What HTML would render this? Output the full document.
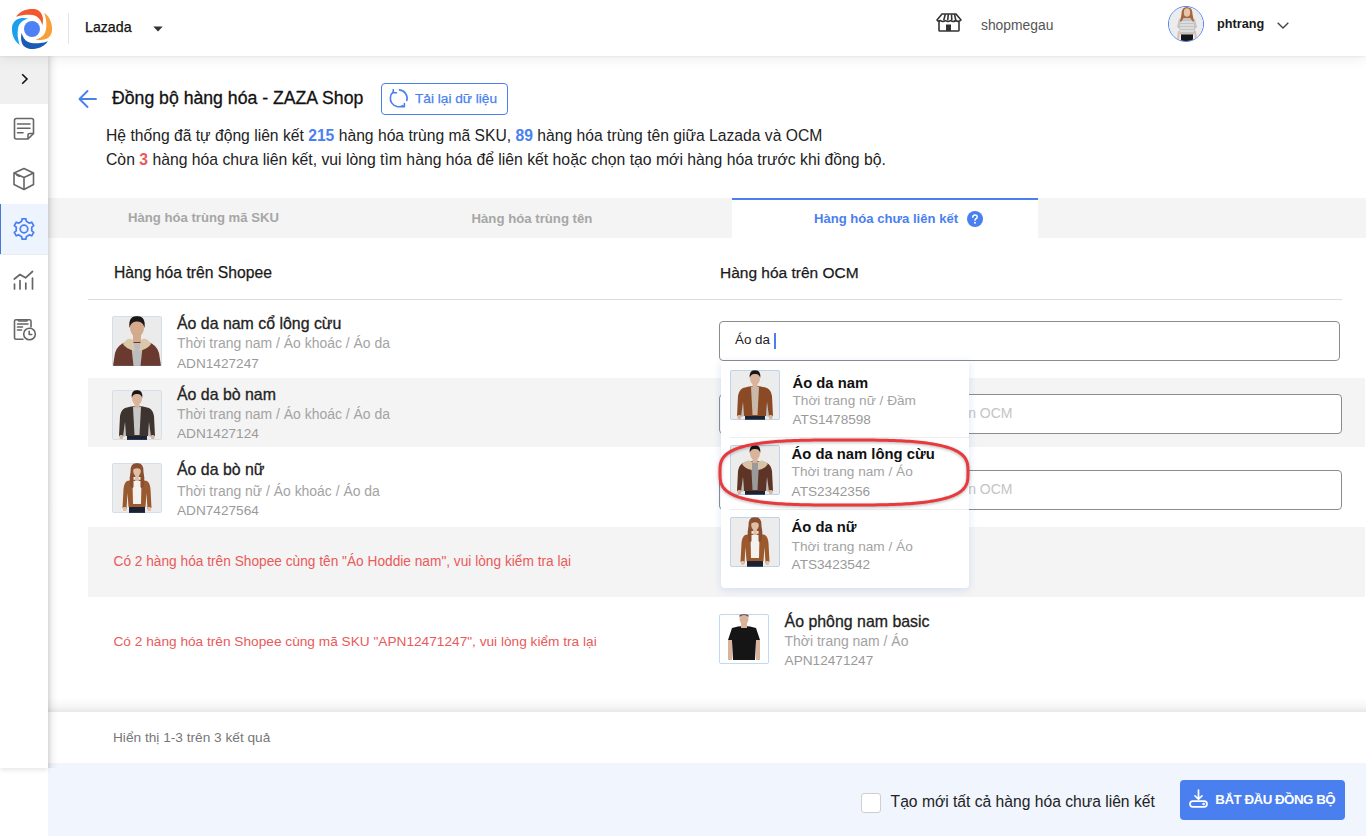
<!DOCTYPE html>
<html><head><meta charset="utf-8"><title>Đồng bộ hàng hóa</title>
<style>
html,body{margin:0;padding:0;width:1366px;height:836px;overflow:hidden;background:#fff;position:relative;font-family:"Liberation Sans", sans-serif;}
.a{position:absolute;}
.a svg{display:block;}
.t{position:absolute;white-space:nowrap;line-height:0;font-family:"Liberation Sans", sans-serif;}
.t b{font-weight:bold;}
.img{width:50px;height:50px;border-radius:2px;overflow:hidden;}

</style></head><body>
<div class="a" style="left:0px;top:0px;width:1366px;height:56px;background:#fff;box-shadow:0 1px 2px rgba(0,0,0,0.05), 0 3px 12px rgba(0,0,0,0.07);z-index:5"></div>
<div class="a" style="left:12px;top:9px;z-index:6"><svg width="40" height="40" viewBox="0 0 40 40"><path d="M32.3 4.1 C36.5 7 39.5 11.5 40.1 19 C40.5 25 37.5 29.5 32.3 30.6 C29.5 31.2 26.5 31 23.7 30.4 C27.5 29.5 31 27.5 32.8 24.3 C34.5 21 34.6 15.5 34.1 11.8 C33.8 9 33.2 6.5 32.3 4.1 Z" fill="#f7a037" transform="rotate(0 20 20)"/><path d="M32.3 4.1 C36.5 7 39.5 11.5 40.1 19 C40.5 25 37.5 29.5 32.3 30.6 C29.5 31.2 26.5 31 23.7 30.4 C27.5 29.5 31 27.5 32.8 24.3 C34.5 21 34.6 15.5 34.1 11.8 C33.8 9 33.2 6.5 32.3 4.1 Z" fill="#1a5cb5" transform="rotate(90 20 20)"/><path d="M32.3 4.1 C36.5 7 39.5 11.5 40.1 19 C40.5 25 37.5 29.5 32.3 30.6 C29.5 31.2 26.5 31 23.7 30.4 C27.5 29.5 31 27.5 32.8 24.3 C34.5 21 34.6 15.5 34.1 11.8 C33.8 9 33.2 6.5 32.3 4.1 Z" fill="#1ba0ef" transform="rotate(180 20 20)"/><path d="M32.3 4.1 C36.5 7 39.5 11.5 40.1 19 C40.5 25 37.5 29.5 32.3 30.6 C29.5 31.2 26.5 31 23.7 30.4 C27.5 29.5 31 27.5 32.8 24.3 C34.5 21 34.6 15.5 34.1 11.8 C33.8 9 33.2 6.5 32.3 4.1 Z" fill="#f3582c" transform="rotate(270 20 20)"/><circle cx="20" cy="20" r="8" fill="#4c82f3"/></svg></div>
<div class="a" style="left:68px;top:13px;width:1px;height:31px;background:#dfe5ef;z-index:6"></div>
<div class="t " style="left:85px;top:27.38px;font-size:14.2px;color:#111;-webkit-text-stroke:0.25px #111;z-index:6">Lazada</div>
<div class="a" style="left:153.2px;top:25.5px;z-index:6"><svg width="10" height="6" viewBox="0 0 10 6"><path d="M0.3 0.5 L9.7 0.5 L5 5.6 Z" fill="#333"/></svg></div>
<div class="a" style="left:936px;top:13px;z-index:6"><svg width="26" height="19" viewBox="0 0 26 19" fill="none" stroke="#333" stroke-width="1.6" stroke-linejoin="round"><path d="M6 1 L20 1 L25 7 Q22.5 9.5 19.8 7.5 Q17 9.5 14.5 7.5 Q12 9.5 9.5 7.5 Q7 9.5 4.5 7.5 Q2.5 9 1 7 Z"/><path d="M9.3 1.2 L7.7 7.4 M12.3 1.2 L11.7 7.4 M15.5 1.2 L15.8 7.4 M18.5 1.2 L19.8 7.4"/><path d="M3 8.5 L3 17.2 Q3 18 4 18 L22 18 Q23 18 23 17.2 L23 8.5"/><rect x="10" y="11.5" width="5" height="6.5" fill="#333" stroke="none"/></svg></div>
<div class="t " style="left:981px;top:25.40px;font-size:13.85px;color:#555;z-index:6">shopmegau</div>
<div class="a" style="left:1168px;top:6px;width:34px;height:34px;border:1px solid #4a7ff0;border-radius:50%;overflow:hidden;z-index:6"><svg width="36" height="36" viewBox="0 0 36 36"><rect width="36" height="36" fill="#ececec"/><rect x="12" y="27" width="12" height="9" fill="#151515"/><path d="M9 24 L8 32 L10 32 L11 24 Z M27 24 L28 32 L26 32 L25 24 Z" fill="#e0bda3"/><path d="M10 12 Q18 9.5 26 12 L28 20 L26 22 L25.5 27.5 L11 27.5 L10.5 22 L8 20 Z" fill="#c4c4c4"/><path d="M11 15 L25 15 M11 18 L25 18 M11 21 L25 21 M11 24 L25 24" stroke="#f4f4f4" stroke-width="1"/><path d="M12.5 7 Q12.5 0 18 0 Q23.5 0 23.5 7 L25 15 Q22.5 14 21.5 11 L14.5 11 Q13.5 14 11 15 Z" fill="#a8643a"/><ellipse cx="18" cy="5.5" rx="3.2" ry="4.3" fill="#e6c4aa"/></svg></div>
<div class="t " style="left:1217px;top:24.30px;font-size:12.7px;color:#1a1a1a;font-weight:bold;z-index:6">phtrang</div>
<div class="a" style="left:1276.5px;top:21.5px;z-index:6"><svg width="12" height="7" viewBox="0 0 12 7"><path d="M0.7 0.7 L6 6 L11.3 0.7" fill="none" stroke="#444" stroke-width="1.4"/></svg></div>
<div class="a" style="left:0px;top:56px;width:48px;height:712px;background:#fff;box-shadow:0 2px 5px rgba(0,0,0,0.10);z-index:4"></div>
<div class="a" style="left:48px;top:56px;width:10px;height:712px;background:linear-gradient(to right, rgba(0,0,0,0.11), rgba(0,0,0,0.03) 50%, rgba(0,0,0,0));z-index:4"></div>
<div class="a" style="left:0px;top:56px;width:48px;height:48px;background:#f0f0f0;z-index:4"></div>
<div class="a" style="left:20.5px;top:72.5px;z-index:4"><svg width="8" height="12" viewBox="0 0 8 12"><path d="M1.2 1.2 L6 6 L1.2 10.8" fill="none" stroke="#111" stroke-width="1.6"/></svg></div>
<div class="a" style="left:13px;top:117px;z-index:4"><svg width="22" height="24" viewBox="0 0 22 24" fill="none" stroke="#666" stroke-width="1.6" stroke-linejoin="round"><path d="M15 22 L3.5 22 Q1.5 22 1.5 20 L1.5 3.5 Q1.5 1.5 3.5 1.5 L18.5 1.5 Q20.5 1.5 20.5 3.5 L20.5 16.5 Z"/><path d="M15 22 L15 18 Q15 16.5 16.5 16.5 L20.5 16.5"/><path d="M4.5 7 L17 7 M4.5 11.3 L17 11.3 M4.5 15.8 L10 15.8" stroke-linecap="round"/></svg></div>
<div class="a" style="left:12px;top:167px;z-index:4"><svg width="24" height="24" viewBox="0 0 24 24" fill="none" stroke="#666" stroke-width="1.6" stroke-linejoin="round"><path d="M12 1.5 L21.5 6 L21.5 17.5 L12 22.5 L2 17.5 L2 6 Z"/><path d="M2 6 L12 10.5 L21.5 6 M12 10.5 L12 22.5"/><path d="M5 8.3 L7.5 9.3" stroke-linecap="round"/></svg></div>
<div class="a" style="left:0px;top:204px;width:48px;height:50px;background:#eef4fe;z-index:4"></div>
<div class="a" style="left:0px;top:204px;width:1px;height:50px;background:#4a78d8;z-index:4"></div>
<div class="a" style="left:0px;top:254px;width:48px;height:1px;background:#e6ebf2;z-index:4"></div>
<div class="a" style="left:12px;top:217px;z-index:4"><svg width="24" height="24" viewBox="0 0 24 24" fill="none" stroke="#4a7ff0" stroke-width="1.7" stroke-linejoin="round"><path d="M9.66 4.35 L10.03 1.89 L13.97 1.89 L14.34 4.35 L17.46 6.15 L19.77 5.24 L21.74 8.65 L19.79 10.20 L19.79 13.80 L21.74 15.35 L19.77 18.76 L17.46 17.85 L14.34 19.65 L13.97 22.11 L10.03 22.11 L9.66 19.65 L6.54 17.85 L4.23 18.76 L2.26 15.35 L4.21 13.80 L4.21 10.20 L2.26 8.65 L4.23 5.24 L6.54 6.15 Z"/><circle cx="12" cy="12" r="3.8"/></svg></div>
<div class="a" style="left:13px;top:269.5px;z-index:4"><svg width="22" height="22" viewBox="0 0 22 22" fill="none" stroke="#666" stroke-width="1.7" stroke-linecap="round" stroke-linejoin="round"><path d="M1.3 9 L7 4.5 L12.5 7.8 L19.5 1.5"/><path d="M1.5 14 L1.5 19 M7 10.5 L7 19 M12.8 13 L12.8 19 M19.5 8 L19.5 19"/></svg></div>
<div class="a" style="left:13px;top:319px;z-index:4"><svg width="24" height="22" viewBox="0 0 24 22" fill="none" stroke="#666" stroke-width="1.6" stroke-linejoin="round"><path d="M10.5 20.3 L3 20.3 Q1.5 20.3 1.5 18.8 L1.5 2.3 Q1.5 0.8 3 0.8 L16.5 0.8 Q18 0.8 18 2.3 L18 8.5"/><path d="M5 0.8 L5.8 2 L13.8 2 L14.5 0.8" /><path d="M4.5 5 L15 5 M4.5 8 L9.5 8 M4.5 11 L8.5 11" stroke-linecap="round"/><circle cx="16.5" cy="15" r="5.8"/><path d="M16.2 12.2 L16.2 15.5 L18.8 15.5" stroke-linecap="round"/></svg></div>
<div class="a" style="left:78px;top:89px;"><svg width="20" height="20" viewBox="0 0 20 20" fill="none" stroke="#4a7ff0" stroke-width="1.9" stroke-linecap="round" stroke-linejoin="round"><path d="M18 10 L2.2 10 M9.5 2 L1.5 10 L9.5 18"/></svg></div>
<div class="t " style="left:112px;top:98.38px;font-size:17.66px;color:#111;-webkit-text-stroke:0.3px #111;">Đồng bộ hàng hóa - ZAZA Shop</div>
<div class="a" style="left:381px;top:83px;width:125px;height:30px;border:1px solid #4a7ff0;border-radius:4px;background:#fff"></div>
<div class="a" style="left:389px;top:89px;"><svg width="20" height="20" viewBox="0 0 20 20" fill="none" stroke="#4a7ff0" stroke-width="1.6" stroke-linecap="round" stroke-linejoin="round"><path d="M10.4 0.9 A8.4 8.4 0 0 1 17.8 11.5"/><path d="M13.9 16.6 A8.4 8.4 0 0 1 4.3 2.9"/><path d="M4.3 0.6 L4.3 3.8 L7.5 3.8"/><path d="M15.4 14.6 L15.4 17.8 L12.2 17.8"/></svg></div>
<div class="t " style="left:415px;top:99.26px;font-size:13.67px;color:#4a7ff0;-webkit-text-stroke:0.25px #4a7ff0;">Tải lại dữ liệu</div>
<div class="t " style="left:106px;top:135.57px;font-size:15.68px;color:#222;">Hệ thống đã tự động liên kết <b style="color:#4a7ff0">215</b> hàng hóa trùng mã SKU, <b style="color:#4a7ff0">89</b> hàng hóa trùng tên giữa Lazada và OCM</div>
<div class="t " style="left:106px;top:159.54px;font-size:15.75px;color:#222;">Còn <b style="color:#e95a5a">3</b> hàng hóa chưa liên kết, vui lòng tìm hàng hóa để liên kết hoặc chọn tạo mới hàng hóa trước khi đồng bộ.</div>
<div class="a" style="left:48px;top:198px;width:1318px;height:40px;background:#f4f4f4"></div>
<div class="a" style="left:732px;top:198px;width:306px;height:40px;background:#fff;box-shadow:inset 0 2px 0 #4a7ff0"></div>
<div class="t " style="left:128px;top:218.45px;font-size:13.13px;color:#a6a6a6;font-weight:bold;">Hàng hóa trùng mã SKU</div>
<div class="t " style="left:471.5px;top:219.43px;font-size:13.2px;color:#a6a6a6;font-weight:bold;">Hàng hóa trùng tên</div>
<div class="t " style="left:814px;top:219.46px;font-size:13.1px;color:#4a7ff0;font-weight:bold;">Hàng hóa chưa liên kết</div>
<div class="a" style="left:967px;top:211px;"><svg width="16" height="16" viewBox="0 0 16 16"><circle cx="8" cy="8" r="8" fill="#4a7ff0"/><path d="M5.8 6.2 Q5.8 3.9 8 3.9 Q10.2 3.9 10.2 5.9 Q10.2 7.1 8.9 7.7 Q8 8.2 8 9.3" fill="none" stroke="#fff" stroke-width="1.5" stroke-linecap="round"/><circle cx="8" cy="11.8" r="0.95" fill="#fff"/></svg></div>
<div class="t " style="left:114px;top:272.56px;font-size:15.7px;color:#1a1a1a;-webkit-text-stroke:0.25px #1a1a1a;">Hàng hóa trên Shopee</div>
<div class="t " style="left:720px;top:272.63px;font-size:15.5px;color:#1a1a1a;-webkit-text-stroke:0.25px #1a1a1a;">Hàng hóa trên OCM</div>
<div class="a" style="left:88px;top:299px;width:1254px;height:1px;background:#dcdcdc"></div>
<div class="a" style="left:88px;top:378px;width:1277px;height:69px;background:#f4f4f4"></div>
<div class="a" style="left:88px;top:527px;width:1277px;height:70px;background:#f4f4f4"></div>
<div class="a img" style="left:112px;top:316px;"><svg width="50" height="50" viewBox="0 0 50 50"><rect width="50" height="50" fill="#ebebeb"/><path d="M1 50 L3 37 Q5 29 14 26 L36 26 Q45 29 47 37 L49 50 Z" fill="#6b3a2e"/><path d="M19 27 L31 27 L28.5 50 L21.5 50 Z" fill="#bdbdbd"/><path d="M11 28 Q16 20 21 24 L23 35 Q14 33 11 28 Z M39 28 Q34 20 29 24 L27 35 Q36 33 39 28 Z" fill="#dac9a9"/><rect x="21" y="17" width="8" height="9" fill="#d4aa8c"/><ellipse cx="25" cy="12" rx="7" ry="9" fill="#d4aa8c"/><path d="M17.5 12 Q16 0 25 0 Q34 0 32.5 12 Q31 5 25 5.5 Q19 5 17.5 12 Z" fill="#1c1614"/></svg></div>
<div class="a" style="left:112px;top:316px;width:48px;height:48px;border:1px solid rgba(110,165,230,0.18);border-radius:2px"></div>
<div class="t " style="left:177px;top:324.49px;font-size:15.9px;color:#222;-webkit-text-stroke:0.3px #222;">Áo da nam cổ lông cừu</div>
<div class="t " style="left:177px;top:343.17px;font-size:13.95px;color:#a3a3a3;">Thời trang nam / Áo khoác / Áo da</div>
<div class="t " style="left:177px;top:364.27px;font-size:13.64px;color:#9a9a9a;">ADN1427247</div>
<div class="a img" style="left:112px;top:390px;"><svg width="50" height="50" viewBox="0 0 50 50"><rect width="50" height="50" fill="#ececec"/><rect x="15" y="45" width="20" height="5" fill="#1d2233"/><path d="M13 18 Q25 14 37 18 Q41 20 42 26 L43 46 L39 47 L37 32 L36 46 L14 46 L13 32 L11 47 L7 46 L8 26 Q9 20 13 18 Z" fill="#3d3430"/><path d="M13 32 L11 47 L14 46 Z M37 32 L39 47 L36 46 Z" fill="#00000030"/><path d="M21 17 L29 17 L27.5 45 L22.5 45 Z" fill="#c8c8c8"/><rect x="7.5" y="45" width="3.5" height="4" rx="1" fill="#d9b49a"/><rect x="39" y="45" width="3.5" height="4" rx="1" fill="#d9b49a"/><rect x="22.5" y="12" width="5" height="6" fill="#d9b49a"/><ellipse cx="25" cy="8.5" rx="5" ry="6.5" fill="#d9b49a"/><path d="M19.8 8 Q19 0 25 0 Q31 0 30.2 8 Q29 3.5 25 4 Q21 3.5 19.8 8 Z" fill="#1a1412"/></svg></div>
<div class="a" style="left:112px;top:390px;width:48px;height:48px;border:1px solid rgba(110,165,230,0.18);border-radius:2px"></div>
<div class="t " style="left:177px;top:394.99px;font-size:15.9px;color:#222;-webkit-text-stroke:0.3px #222;">Áo da bò nam</div>
<div class="t " style="left:177px;top:414.17px;font-size:13.95px;color:#a3a3a3;">Thời trang nam / Áo khoác / Áo da</div>
<div class="t " style="left:177px;top:433.77px;font-size:13.64px;color:#9a9a9a;">ADN1427124</div>
<div class="a img" style="left:112px;top:463px;"><svg width="50" height="50" viewBox="0 0 50 50"><rect width="50" height="50" fill="#ececec"/><rect x="17" y="44" width="16" height="6" fill="#1d2233"/><path d="M15 18 Q25 15 35 18 Q38 20 38.5 26 L39.5 45 L35.5 46 L34.5 30 L33.5 44 L16.5 44 L15.5 30 L14.5 46 L10.5 45 L11.5 26 Q12 20 15 18 Z" fill="#9a5a30"/><path d="M20.5 18 L29.5 18 L29 41 L21 41 Z" fill="#f4f2ee"/><path d="M18.5 9 Q18 0 25 0 Q32 0 31.5 9 Q33 15 32 22 Q30 27 28.5 24 L28.5 14 L21.5 14 L21.5 24 Q20 27 18 22 Q17 15 18.5 9 Z" fill="#8a4f2e"/><rect x="23.2" y="12" width="3.6" height="6" fill="#e0bfa5"/><ellipse cx="25" cy="8" rx="3.8" ry="5.2" fill="#e0bfa5"/><path d="M21 6.5 Q22 1.5 25.5 2 Q29 2.5 29 7 Q26.5 4 21 6.5 Z" fill="#8a4f2e"/><rect x="35.5" y="44" width="3.5" height="4" rx="1" fill="#e0bfa5"/><rect x="11" y="44" width="3.5" height="4" rx="1" fill="#e0bfa5"/></svg></div>
<div class="a" style="left:112px;top:463px;width:48px;height:48px;border:1px solid rgba(110,165,230,0.18);border-radius:2px"></div>
<div class="t " style="left:177px;top:469.99px;font-size:15.9px;color:#222;-webkit-text-stroke:0.3px #222;">Áo da bò nữ</div>
<div class="t " style="left:177px;top:491.17px;font-size:13.95px;color:#a3a3a3;">Thời trang nữ / Áo khoác / Áo da</div>
<div class="t " style="left:177px;top:510.97px;font-size:13.64px;color:#9a9a9a;">ADN7427564</div>
<div class="a" style="left:719px;top:321px;width:619px;height:38px;border:1px solid #8c8c8c;border-radius:4px;background:#fff"></div>
<div class="t " style="left:735px;top:339.96px;font-size:13.4px;color:#222;">Áo da</div>
<div class="a" style="left:774px;top:333px;width:1.5px;height:16px;background:#4a7ff0"></div>
<div class="a" style="left:719px;top:394px;width:621px;height:38px;border:1px solid #8c8c8c;border-radius:4px;background:#fff;overflow:hidden"><div class="t " style="left:292.5px;top:18.15px;font-size:14px;color:#c4c4c4;transform:translateX(-100%);">Nhập tên hoặc mã SKU để tìm kiếm hàng hóa trên OCM</div>
</div>
<div class="a" style="left:719px;top:470px;width:621px;height:38px;border:1px solid #8c8c8c;border-radius:4px;background:#fff;overflow:hidden"><div class="t " style="left:292.5px;top:17.75px;font-size:14px;color:#c4c4c4;transform:translateX(-100%);">Nhập tên hoặc mã SKU để tìm kiếm hàng hóa trên OCM</div>
</div>
<div class="t " style="left:113.5px;top:561.55px;font-size:13.71px;color:#e95a5a;">Có 2 hàng hóa trên Shopee cùng tên "Áo Hoddie nam", vui lòng kiểm tra lại</div>
<div class="t " style="left:113.5px;top:642.26px;font-size:13.68px;color:#e95a5a;">Có 2 hàng hóa trên Shopee cùng mã SKU "APN12471247", vui lòng kiểm tra lại</div>
<div class="a img" style="left:719px;top:614px;"><svg width="50" height="50" viewBox="0 0 50 50"><rect width="50" height="50" fill="#ffffff"/><path d="M13 14 Q25 10 37 14 L41 26 L37 27 L36 46 L14 46 L13 27 L9 26 Z" fill="#151515"/><rect x="9" y="26" width="4" height="20" fill="#d7b49a"/><rect x="37" y="26" width="4" height="20" fill="#d7b49a"/><rect x="22" y="8" width="6" height="6" fill="#d7b49a"/><ellipse cx="25" cy="5" rx="4.5" ry="5.5" fill="#d9b49a"/><path d="M20.5 3 Q25 -1 29.5 3 L29.5 1 Q25 -1 20.5 1 Z" fill="#6a4a3a"/></svg></div>
<div class="a" style="left:719px;top:614px;width:48px;height:48px;border:1px solid rgba(110,165,230,0.18);border-radius:2px"></div>
<div class="t " style="left:784.6px;top:622.29px;font-size:15.9px;color:#222;-webkit-text-stroke:0.3px #222;">Áo phông nam basic</div>
<div class="t " style="left:784.6px;top:640.97px;font-size:13.95px;color:#a3a3a3;">Thời trang nam / Áo</div>
<div class="t " style="left:784.6px;top:660.57px;font-size:13.64px;color:#9a9a9a;">APN12471247</div>
<div class="a" style="left:719px;top:614px;width:48px;height:48px;border:1px solid rgba(110,165,230,0.3);border-radius:2px"></div>
<div class="a" style="left:48px;top:698px;width:1318px;height:14px;background:linear-gradient(to bottom, rgba(0,0,0,0), rgba(0,0,0,0.035) 60%, rgba(0,0,0,0.09))"></div>
<div class="t " style="left:113px;top:737.96px;font-size:13.68px;color:#777;">Hiển thị 1-3 trên 3 kết quả</div>
<div class="a" style="left:48px;top:763px;width:1318px;height:73px;background:#f0f5fe"></div>
<div class="a" style="left:861px;top:793px;width:18px;height:18px;border:1px solid #cfcfcf;border-radius:3px;background:#fff"></div>
<div class="t " style="left:890.6px;top:802.28px;font-size:15.65px;color:#222;">Tạo mới tất cả hàng hóa chưa liên kết</div>
<div class="a" style="left:1180px;top:780px;width:165px;height:40px;background:#4a7ff0;border-radius:4px"></div>
<div class="a" style="left:1188.5px;top:788.5px;"><svg width="20" height="19" viewBox="0 0 20 19" fill="none" stroke="#fff" stroke-width="1.7" stroke-linecap="round" stroke-linejoin="round"><path d="M9.5 1 L9.5 10 M6 6.8 L9.5 10.2 L13 6.8"/><rect x="1" y="12.2" width="17" height="5.6" rx="2.8"/><circle cx="14.6" cy="15" r="0.5" fill="#fff"/></svg></div>
<div class="t " style="left:1215.3px;top:800.39px;font-size:13.3px;color:#fff;font-weight:bold;letter-spacing:-0.48px;">BẮT ĐẦU ĐỒNG BỘ</div>
<div class="a" style="left:721px;top:361px;width:248px;height:227px;background:#fff;border-radius:0 0 4px 4px;box-shadow:0 2px 8px rgba(60,110,220,0.18);z-index:10"></div>
<div class="a img" style="left:730px;top:370px;z-index:11"><svg width="50" height="50" viewBox="0 0 50 50"><rect width="50" height="50" fill="#ececec"/><rect x="15" y="45" width="20" height="5" fill="#1d2233"/><path d="M13 18 Q25 14 37 18 Q41 20 42 26 L43 46 L39 47 L37 32 L36 46 L14 46 L13 32 L11 47 L7 46 L8 26 Q9 20 13 18 Z" fill="#8a4a26"/><path d="M13 32 L11 47 L14 46 Z M37 32 L39 47 L36 46 Z" fill="#00000030"/><path d="M21 17 L29 17 L27.5 45 L22.5 45 Z" fill="#c9b9a8"/><rect x="7.5" y="45" width="3.5" height="4" rx="1" fill="#d9b49a"/><rect x="39" y="45" width="3.5" height="4" rx="1" fill="#d9b49a"/><rect x="22.5" y="12" width="5" height="6" fill="#d9b49a"/><ellipse cx="25" cy="8.5" rx="5" ry="6.5" fill="#d9b49a"/><path d="M19.8 8 Q19 0 25 0 Q31 0 30.2 8 Q29 3.5 25 4 Q21 3.5 19.8 8 Z" fill="#1a1412"/></svg></div>
<div class="a" style="left:730px;top:370px;width:48px;height:48px;border:1px solid rgba(110,165,230,0.35);border-radius:2px;z-index:11"></div>
<div class="t " style="left:792.5px;top:382.67px;font-size:14.8px;color:#111;font-weight:bold;z-index:11">Áo da nam</div>
<div class="t " style="left:792.5px;top:401.27px;font-size:13.65px;color:#a3a3a3;z-index:11">Thời trang nữ / Đầm</div>
<div class="t " style="left:792.5px;top:420.28px;font-size:13.62px;color:#9a9a9a;z-index:11">ATS1478598</div>
<div class="a" style="left:730px;top:437px;width:239px;height:1px;background:#ececec;z-index:11"></div>
<div class="a img" style="left:730px;top:445px;z-index:11"><svg width="50" height="50" viewBox="0 0 50 50"><rect width="50" height="50" fill="#ececec"/><rect x="15" y="45" width="20" height="5" fill="#1d2233"/><path d="M13 18 Q25 14 37 18 Q41 20 42 26 L43 46 L39 47 L37 32 L36 46 L14 46 L13 32 L11 47 L7 46 L8 26 Q9 20 13 18 Z" fill="#5e3426"/><path d="M13 32 L11 47 L14 46 Z M37 32 L39 47 L36 46 Z" fill="#00000030"/><path d="M21 17 L29 17 L27.5 45 L22.5 45 Z" fill="#9a9a9a"/><path d="M12 19 Q18 13 22 17 L22 25 Q15 24 12 19 Z M38 19 Q32 13 28 17 L28 25 Q35 24 38 19 Z" fill="#d8c4a4"/><rect x="7.5" y="45" width="3.5" height="4" rx="1" fill="#d9b49a"/><rect x="39" y="45" width="3.5" height="4" rx="1" fill="#d9b49a"/><rect x="22.5" y="12" width="5" height="6" fill="#d9b49a"/><ellipse cx="25" cy="8.5" rx="5" ry="6.5" fill="#d9b49a"/><path d="M19.8 8 Q19 0 25 0 Q31 0 30.2 8 Q29 3.5 25 4 Q21 3.5 19.8 8 Z" fill="#1a1412"/></svg></div>
<div class="a" style="left:730px;top:445px;width:48px;height:48px;border:1px solid rgba(110,165,230,0.35);border-radius:2px;z-index:11"></div>
<div class="t " style="left:791.6px;top:454.47px;font-size:14.8px;color:#111;font-weight:bold;z-index:11">Áo da nam lông cừu</div>
<div class="t " style="left:791.6px;top:472.47px;font-size:13.65px;color:#a3a3a3;z-index:11">Thời trang nam / Áo</div>
<div class="t " style="left:791.6px;top:491.58px;font-size:13.62px;color:#9a9a9a;z-index:11">ATS2342356</div>
<div class="a" style="left:730px;top:509px;width:239px;height:1px;background:#ececec;z-index:11"></div>
<div class="a img" style="left:730px;top:517px;z-index:11"><svg width="50" height="50" viewBox="0 0 50 50"><rect width="50" height="50" fill="#ececec"/><rect x="17" y="44" width="16" height="6" fill="#1d2233"/><path d="M15 18 Q25 15 35 18 Q38 20 38.5 26 L39.5 45 L35.5 46 L34.5 30 L33.5 44 L16.5 44 L15.5 30 L14.5 46 L10.5 45 L11.5 26 Q12 20 15 18 Z" fill="#9c5a2c"/><path d="M20.5 18 L29.5 18 L29 41 L21 41 Z" fill="#f4f2ee"/><path d="M18.5 9 Q18 0 25 0 Q32 0 31.5 9 Q33 15 32 22 Q30 27 28.5 24 L28.5 14 L21.5 14 L21.5 24 Q20 27 18 22 Q17 15 18.5 9 Z" fill="#8a4f2e"/><rect x="23.2" y="12" width="3.6" height="6" fill="#e0bfa5"/><ellipse cx="25" cy="8" rx="3.8" ry="5.2" fill="#e0bfa5"/><path d="M21 6.5 Q22 1.5 25.5 2 Q29 2.5 29 7 Q26.5 4 21 6.5 Z" fill="#8a4f2e"/><rect x="35.5" y="44" width="3.5" height="4" rx="1" fill="#e0bfa5"/><rect x="11" y="44" width="3.5" height="4" rx="1" fill="#e0bfa5"/></svg></div>
<div class="a" style="left:730px;top:517px;width:48px;height:48px;border:1px solid rgba(110,165,230,0.35);border-radius:2px;z-index:11"></div>
<div class="t " style="left:791.6px;top:527.17px;font-size:14.8px;color:#111;font-weight:bold;z-index:11">Áo da nữ</div>
<div class="t " style="left:791.6px;top:546.77px;font-size:13.65px;color:#a3a3a3;z-index:11">Thời trang nam / Áo</div>
<div class="t " style="left:791.6px;top:565.28px;font-size:13.62px;color:#9a9a9a;z-index:11">ATS3423542</div>
<svg class="a" style="left:714px;top:434px;z-index:12;overflow:visible" width="260" height="78" viewBox="0 0 260 78"><path d="M254.00 38.50 L253.97 41.83 L253.89 43.64 L253.76 45.12 L253.58 46.42 L253.34 47.60 L253.04 48.69 L252.70 49.71 L252.30 50.68 L251.85 51.59 L251.34 52.46 L250.78 53.30 L250.17 54.10 L249.51 54.87 L248.79 55.61 L248.01 56.33 L247.19 57.02 L246.31 57.69 L245.37 58.34 L244.38 58.97 L243.34 59.57 L242.24 60.16 L241.09 60.73 L239.88 61.28 L238.62 61.82 L237.30 62.33 L235.92 62.83 L234.49 63.32 L233.00 63.78 L231.45 64.23 L229.85 64.67 L228.19 65.09 L226.46 65.50 L224.68 65.89 L222.84 66.26 L220.93 66.62 L218.96 66.97 L216.92 67.30 L214.82 67.62 L212.65 67.92 L210.40 68.21 L208.09 68.48 L205.70 68.74 L203.23 68.98 L200.67 69.21 L198.03 69.43 L195.29 69.63 L192.46 69.82 L189.52 70.00 L186.46 70.16 L183.28 70.30 L179.95 70.44 L176.46 70.55 L172.79 70.66 L168.89 70.75 L164.73 70.83 L160.23 70.89 L155.27 70.94 L149.62 70.97 L142.72 70.99 L130.00 71.00 L117.28 70.99 L110.38 70.97 L104.73 70.94 L99.77 70.89 L95.27 70.83 L91.11 70.75 L87.21 70.66 L83.54 70.55 L80.05 70.44 L76.72 70.30 L73.54 70.16 L70.48 70.00 L67.54 69.82 L64.71 69.63 L61.97 69.43 L59.33 69.21 L56.77 68.98 L54.30 68.74 L51.91 68.48 L49.60 68.21 L47.35 67.92 L45.18 67.62 L43.08 67.30 L41.04 66.97 L39.07 66.62 L37.16 66.26 L35.32 65.89 L33.54 65.50 L31.81 65.09 L30.15 64.67 L28.55 64.23 L27.00 63.78 L25.51 63.32 L24.08 62.83 L22.70 62.33 L21.38 61.82 L20.12 61.28 L18.91 60.73 L17.76 60.16 L16.66 59.57 L15.62 58.97 L14.63 58.34 L13.69 57.69 L12.81 57.02 L11.99 56.33 L11.21 55.61 L10.49 54.87 L9.83 54.10 L9.22 53.30 L8.66 52.46 L8.15 51.59 L7.70 50.68 L7.30 49.71 L6.96 48.69 L6.66 47.60 L6.42 46.42 L6.24 45.12 L6.11 43.64 L6.03 41.83 L6.00 38.50 L6.03 35.17 L6.11 33.36 L6.24 31.88 L6.42 30.58 L6.66 29.40 L6.96 28.31 L7.30 27.29 L7.70 26.32 L8.15 25.41 L8.66 24.54 L9.22 23.70 L9.83 22.90 L10.49 22.13 L11.21 21.39 L11.99 20.67 L12.81 19.98 L13.69 19.31 L14.63 18.66 L15.62 18.03 L16.66 17.43 L17.76 16.84 L18.91 16.27 L20.12 15.72 L21.38 15.18 L22.70 14.67 L24.08 14.17 L25.51 13.68 L27.00 13.22 L28.55 12.77 L30.15 12.33 L31.81 11.91 L33.54 11.50 L35.32 11.11 L37.16 10.74 L39.07 10.38 L41.04 10.03 L43.08 9.70 L45.18 9.38 L47.35 9.08 L49.60 8.79 L51.91 8.52 L54.30 8.26 L56.77 8.02 L59.33 7.79 L61.97 7.57 L64.71 7.37 L67.54 7.18 L70.48 7.00 L73.54 6.84 L76.72 6.70 L80.05 6.56 L83.54 6.45 L87.21 6.34 L91.11 6.25 L95.27 6.17 L99.77 6.11 L104.73 6.06 L110.38 6.03 L117.28 6.01 L130.00 6.00 L142.72 6.01 L149.62 6.03 L155.27 6.06 L160.23 6.11 L164.73 6.17 L168.89 6.25 L172.79 6.34 L176.46 6.45 L179.95 6.56 L183.28 6.70 L186.46 6.84 L189.52 7.00 L192.46 7.18 L195.29 7.37 L198.03 7.57 L200.67 7.79 L203.23 8.02 L205.70 8.26 L208.09 8.52 L210.40 8.79 L212.65 9.08 L214.82 9.38 L216.92 9.70 L218.96 10.03 L220.93 10.38 L222.84 10.74 L224.68 11.11 L226.46 11.50 L228.19 11.91 L229.85 12.33 L231.45 12.77 L233.00 13.22 L234.49 13.68 L235.92 14.17 L237.30 14.67 L238.62 15.18 L239.88 15.72 L241.09 16.27 L242.24 16.84 L243.34 17.43 L244.38 18.03 L245.37 18.66 L246.31 19.31 L247.19 19.98 L248.01 20.67 L248.79 21.39 L249.51 22.13 L250.17 22.90 L250.78 23.70 L251.34 24.54 L251.85 25.41 L252.30 26.32 L252.70 27.29 L253.04 28.31 L253.34 29.40 L253.58 30.58 L253.76 31.88 L253.89 33.36 L253.97 35.17 L254.00 38.50 Z" fill="none" stroke="#e8393c" stroke-width="3" style="filter:drop-shadow(0 1px 1.5px rgba(0,0,0,0.3))"/></svg>
</body></html>
